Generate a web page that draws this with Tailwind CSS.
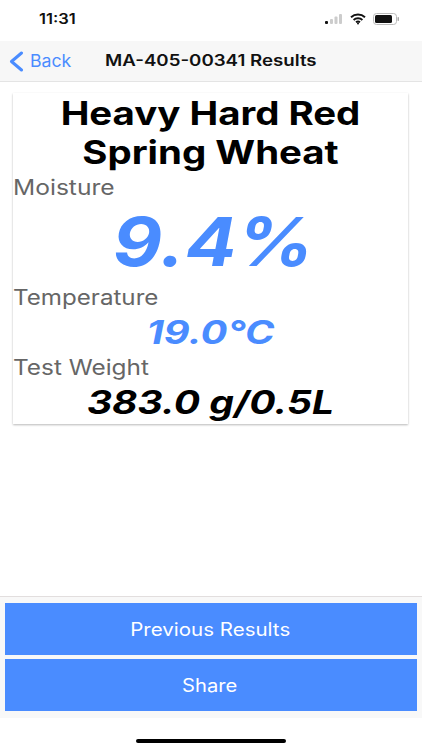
<!DOCTYPE html>
<html><head><meta charset="utf-8"><script src="https://cdn.jsdelivr.net/npm/@tailwindcss/browser@4"></script></head>
<body class="bg-white">
<div class="w-[422px] h-[750px] flex flex-col overflow-hidden bg-white font-['Inter',sans-serif]">
  <div class="h-[41px] flex items-center justify-between pl-[39px] pr-[22px] pb-[4px] shrink-0">
    <span class="inline-block origin-left scale-x-[1.18] text-[14px] font-semibold text-[#111] leading-none">11:31</span>
    <div class="flex items-center gap-[7px]">
      <svg width="20" height="12" viewBox="0 0 20 12"><rect x="2" y="8" width="3" height="3" rx="1" fill="#111"/><rect x="7" y="6" width="3" height="5" rx="1" fill="#ccc"/><rect x="11.5" y="3.5" width="3" height="7.5" rx="1" fill="#ccc"/><rect x="16" y="1" width="3" height="10" rx="1" fill="#ccc"/></svg>
      <svg width="16" height="12" viewBox="0 0 16 12" fill="none" stroke="#111" stroke-width="2"><path d="M1 4.2C5 .6 11 .6 15 4.2"/><path d="M3.6 6.9C6 4.8 10 4.8 12.4 6.9"/><path d="M6 9.2C7.2 8.3 8.8 8.3 10 9.2"/><circle cx="8" cy="10.6" r="1" fill="#111" stroke="none"/></svg>
      <svg width="27" height="12" viewBox="0 0 27 12"><rect x=".5" y=".5" width="23" height="11" rx="3" fill="none" stroke="#bbb"/><rect x="2" y="2" width="17" height="8" rx="1.5" fill="#111"/><rect x="24.5" y="4" width="1.5" height="4" rx=".7" fill="#aaa"/></svg>
    </div>
  </div>
  <div class="h-[41px] shrink-0 bg-[#f7f7f7] border-b border-[#e4e4e4] flex items-center">
    <svg class="ml-[9px]" width="15" height="21" viewBox="0 0 15 21" fill="none" stroke="#4a8cff" stroke-width="3" stroke-linecap="round" stroke-linejoin="round"><path d="M12.5 2 2.5 10.5l10 8.5"/></svg>
    <span class="inline-block origin-left scale-x-[1.04] ml-[6px] text-[17px] text-[#4a8cff] leading-none w-[39px]">Back</span>
    <span class="inline-block origin-left scale-x-[1.205] ml-[36px] text-[15.5px] font-semibold text-[#111] leading-none">MA-405-00341 Results</span>
  </div>
  <div class="flex-1 min-h-0 pt-[11px] px-[13px]">
    <div class="h-[331px] w-[395px] bg-white shadow-[0_1px_2px_rgba(0,0,0,0.28)] flex flex-col">
      <h1 class="scale-x-[1.2] text-center text-[32px] leading-[39px] font-bold text-black pt-[1px]">Heavy Hard Red<br>Spring Wheat</h1>
      <div class="origin-left scale-x-[1.17] text-[21px] leading-[26px] text-[#666] mt-[3px]">Moisture</div>
      <div class="scale-x-[1.135] pl-[5px] text-center text-[67px] leading-[82px] font-bold italic text-[#4a8cff]">9.4%</div>
      <div class="origin-left scale-x-[1.15] text-[21px] leading-[26px] text-[#666] mt-[2px]">Temperature</div>
      <div class="scale-x-[1.245] text-center text-[32px] leading-[44px] font-bold italic text-[#4a8cff]">19.0°C</div>
      <div class="origin-left scale-x-[1.16] text-[21px] leading-[26px] text-[#666]">Test Weight</div>
      <div class="scale-x-[1.22] text-center text-[32px] leading-[44px] font-bold italic text-black">383.0 g/0.5L</div>
    </div>
  </div>
  <div class="h-[122px] shrink-0 bg-[#f8f8f8] border-t border-[#e2dede] px-[5px] pt-[6px] flex flex-col gap-[4px]">
    <button class="h-[52px] bg-[#4a8cff] text-white text-[18px]"><span class="inline-block scale-x-[1.14] -translate-x-[1px]">Previous Results</span></button>
    <button class="h-[52px] bg-[#4a8cff] text-white text-[18px]"><span class="inline-block scale-x-[1.12] -translate-x-[1px]">Share</span></button>
  </div>
  <div class="h-[32px] shrink-0 flex justify-center pt-[21px]">
    <div class="w-[150px] h-[4px] rounded-full bg-black"></div>
  </div>
</div>
</body></html>
